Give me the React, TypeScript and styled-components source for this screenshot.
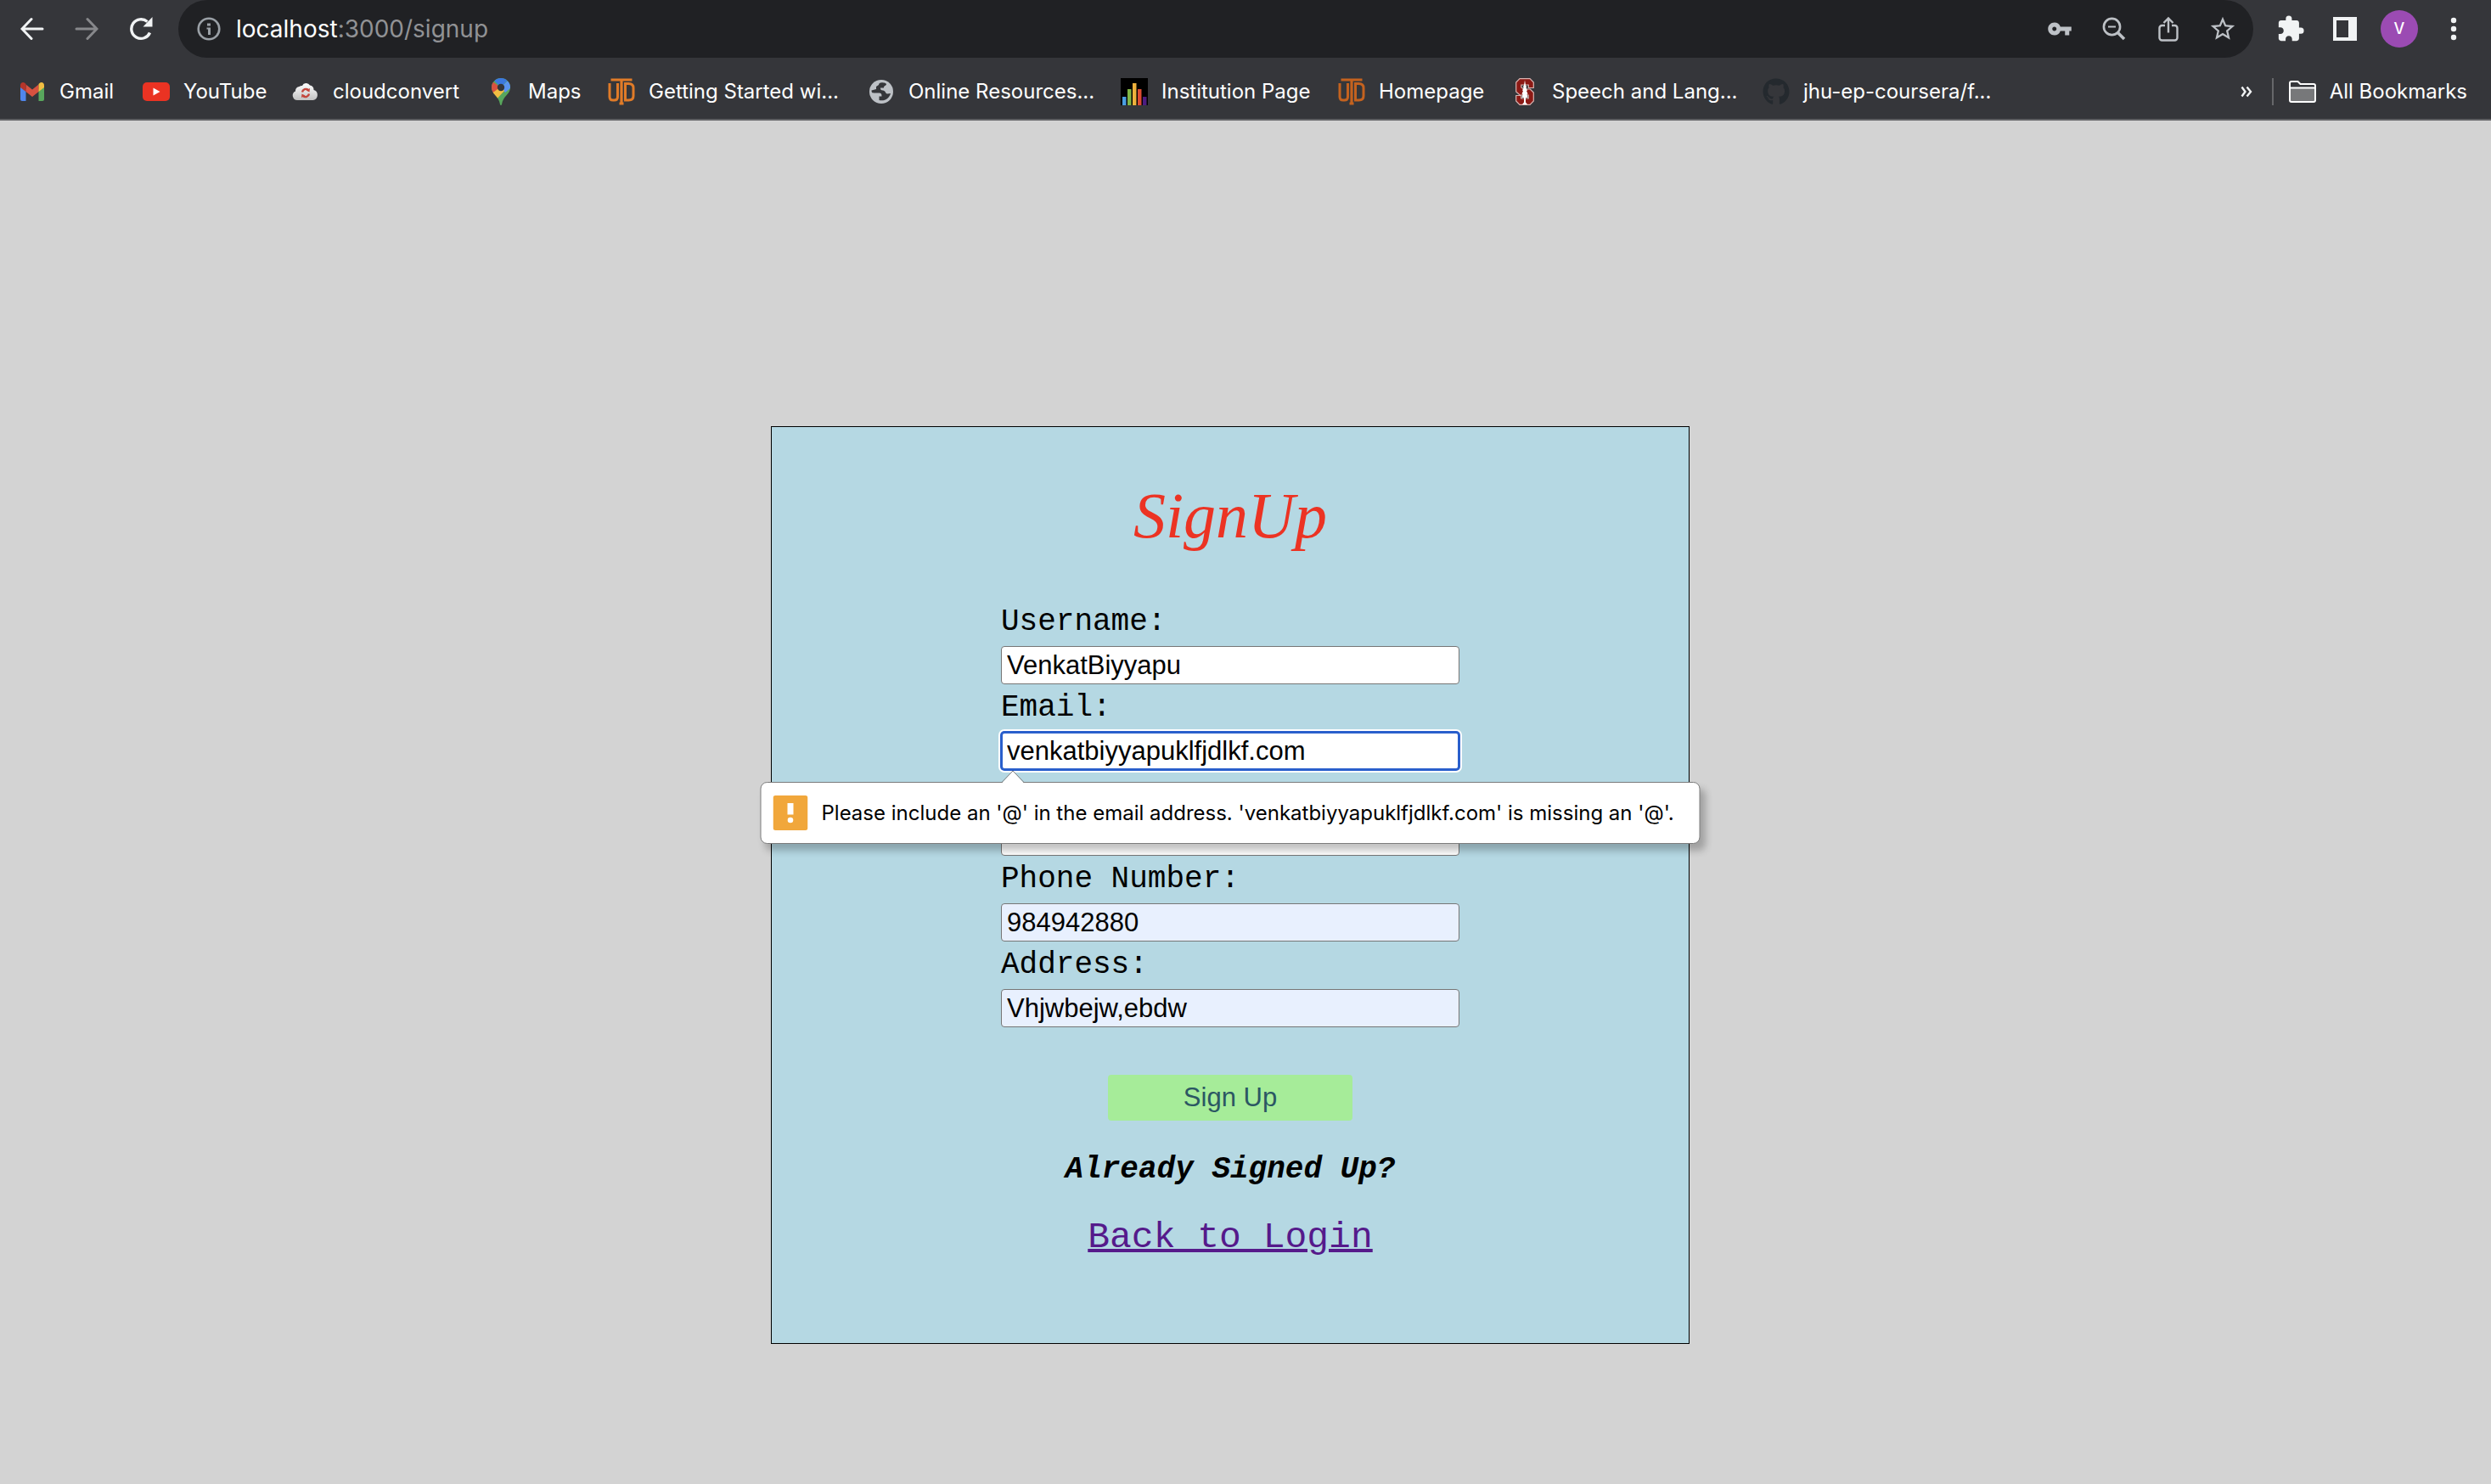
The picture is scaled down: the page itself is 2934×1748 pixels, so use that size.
import React from "react";
import styled, { createGlobalStyle, css } from "styled-components";
import { MdVpnKey, MdStarBorder, MdExtension } from "react-icons/md";
import { FaGithub } from "react-icons/fa";

const uiFont = `Inter, Roboto, sans-serif`;
const monoFont = `"Liberation Mono", "Courier New", monospace`;
const formFont = `"Liberation Sans", Arial, sans-serif`;

const GlobalStyle = createGlobalStyle`
  * { box-sizing: border-box; }
  body { margin: 0; background: #d3d3d3; }
`;

const Window = styled.div`
  display: flex;
  flex-direction: column;
  min-height: 100vh;
`;

const Chrome = styled.header`
  background: #35363a;
  border-bottom: 2px solid #5f6063;
  font-family: ${uiFont};
`;

const Toolbar = styled.div`
  display: flex;
  align-items: center;
  height: 68px;
  padding-right: 26px;
`;

const NavButtons = styled.nav`
  display: flex;
  gap: 28px;
  padding: 0 26px 0 20px;
`;

const IconButton = styled.button<{ $tone?: string }>`
  display: flex;
  align-items: center;
  justify-content: center;
  width: 36px;
  height: 36px;
  padding: 0;
  border: 0;
  background: none;
  color: ${(p) => p.$tone ?? "#f1f3f4"};
  font: 500 24px/1 ${uiFont};
`;

const Omnibox = styled.div`
  display: flex;
  flex: 1;
  align-items: center;
  height: 68px;
  padding: 0 18px;
  border-radius: 34px;
  background: #202124;
`;

const Address = styled.div`
  flex: 1;
  padding-left: 14px;
  color: #919295;
  font-size: 28px;
  line-height: 36px;
  b { color: #fff; font-weight: 400; }
`;

const OmniboxActions = styled.div`
  display: flex;
  gap: 28px;
`;

const ToolbarActions = styled.div`
  display: flex;
  align-items: center;
  gap: 28px;
  padding-left: 26px;
`;

const Avatar = styled.button`
  width: 44px;
  height: 44px;
  margin: 0 -4px;
  padding: 0;
  border: 0;
  border-radius: 50%;
  background: #9b4bb3;
  color: #fff;
  font: 500 18px/44px ${uiFont};
`;

const BookmarkBar = styled.nav`
  display: flex;
  align-items: center;
  height: 72px;
  padding: 8px 28px 0 22px;
`;

const Bookmark = styled.a<{ $width?: number }>`
  display: flex;
  flex: none;
  align-items: center;
  gap: 16px;
  width: ${(p) => (p.$width ? `${p.$width}px` : "auto")};
  color: #fff;
  font-size: 24px;
  line-height: 32px;
  white-space: nowrap;
  text-decoration: none;
`;

const BarEnd = styled.div`
  display: flex;
  align-items: center;
  gap: 12px;
  margin-left: auto;
`;

const Separator = styled.span`
  width: 2px;
  height: 32px;
  margin-right: 6px;
  background: #66676a;
`;

const Page = styled.main`
  display: flex;
  flex: 1;
  align-items: flex-start;
  justify-content: center;
  padding: 360px 36px 160px 0;
`;

const Card = styled.form`
  display: flex;
  flex-direction: column;
  align-items: center;
  width: 1082px;
  padding: 60px 0 98px;
  border: 1px solid #000;
  background: #b5d8e3;
`;

const Title = styled.h1`
  margin: 0 0 62px;
  color: #ec3323;
  font: italic 400 76px/88px "Apple Chancery", "Liberation Serif", serif;
`;

const Fields = styled.div`
  display: flex;
  flex-direction: column;
  gap: 8px;
  width: 540px;
`;

const Field = styled.div`
  position: relative;
  display: flex;
  flex-direction: column;
  gap: 8px;
`;

const Label = styled.label`
  min-height: 40px;
  color: #000;
  font: 400 36px/40px ${monoFont};
`;

const Input = styled.input<{ $state?: "filled" | "invalid" }>`
  width: 100%;
  height: 45px;
  padding: 0 6px;
  border: 1px solid #767676;
  border-radius: 4px;
  outline: 0;
  background: ${(p) => (p.$state === "filled" ? "#e8f0fe" : "#fff")};
  color: #000;
  font: 400 31px/40px ${formFont};
  ${(p) =>
    p.$state === "invalid" &&
    css`
      padding: 0 5px;
      border: 2px solid #2a5fcc;
      box-shadow: 0 0 0 1px #2a5fcc, 0 0 0 3px #fff;
    `}
`;

const Tooltip = styled.div`
  position: absolute;
  z-index: 1;
  top: 107px;
  left: 50%;
  display: flex;
  align-items: center;
  gap: 16px;
  width: 1107px;
  height: 73px;
  padding: 0 14px;
  border: 1px solid #7c7c7c;
  border-radius: 8px;
  background: #fff;
  box-shadow: 6px 8px 8px rgba(0, 0, 0, 0.24);
  color: #000;
  font: 400 24px/32px ${uiFont};
  white-space: nowrap;
  transform: translateX(-50%);
`;

const Pointer = styled.svg`
  position: absolute;
  top: -15px;
  left: 283px;
`;

const SubmitButton = styled.button`
  width: 288px;
  height: 54px;
  margin: 56px 0 34px;
  padding: 0;
  border: 0;
  border-radius: 4px;
  background: #a6ec99;
  color: #2b5763;
  font: 400 31px/40px ${formFont};
`;

const Prompt = styled.p`
  margin: 0 0 30px;
  color: #000;
  font: italic 700 36px/48px ${monoFont};
`;

const LoginLink = styled.a`
  color: #551a8b;
  font: 400 43px/52px ${monoFont};
  text-decoration: underline;
  text-decoration-thickness: 4px;
`;

const stroke = { fill: "none", stroke: "currentColor", strokeWidth: 3 };

const BackIcon = () => (
  <svg width="28" height="28" viewBox="0 0 28 28" {...stroke} strokeLinecap="round">
    <path d="M26 14H2.500M13 2.500 2 14l11 11.500" />
  </svg>
);
const ForwardIcon = () => (
  <svg width="28" height="28" viewBox="0 0 28 28" {...stroke} strokeLinecap="round">
    <path d="M2 14h23.500M15 2.500 26 14 15 25.500" />
  </svg>
);
const ReloadIcon = () => (
  <svg width="28" height="28" viewBox="0 0 28 28">
    <path d="M24.500 18.500A11.300 11.300 0 1 1 21.500 5.500" fill="none" stroke="currentColor" strokeWidth="3.400" />
    <path d="M27.500 0v11.500H16.500z" fill="currentColor" />
  </svg>
);
const InfoIcon = () => (
  <svg width="28" height="28" viewBox="0 0 28 28">
    <circle cx="14" cy="14" r="12.300" fill="none" stroke="#9aa0a6" strokeWidth="2.600" />
    <path d="M12 7.500h4v3h-4zM11.500 12.500H16v8.500h-3v-6.500h-1.500z" fill="#9aa0a6" />
  </svg>
);
const ZoomOutIcon = () => (
  <svg width="28" height="28" viewBox="0 0 28 28" {...stroke}>
    <circle cx="11.500" cy="11.500" r="9.600" strokeWidth="2.600" />
    <path d="M7 11.500h9" strokeWidth="2" />
    <path d="m18.500 18.500 7.500 7.500" strokeWidth="3.600" />
  </svg>
);
const ShareIcon = () => (
  <svg width="24" height="30" viewBox="0 0 24 30" {...stroke} strokeWidth={2.4}>
    <path d="M8 11H4.500a3 3 0 0 0-3 3v11.500a3 3 0 0 0 3 3h15a3 3 0 0 0 3-3V14a3 3 0 0 0-3-3H16M12 19.500V2.500M6.500 8 12 2.500 17.500 8" />
  </svg>
);
const PanelIcon = () => (
  <svg width="28" height="28" viewBox="0 0 28 28">
    <path fill="currentColor" fillRule="evenodd" d="M0 0h28v28H0zM4 4v20h14V4z" />
  </svg>
);
const DotsIcon = () => (
  <svg width="8" height="28" viewBox="0 0 8 28" fill="currentColor">
    <circle cx="4" cy="4" r="3.200" />
    <circle cx="4" cy="14" r="3.200" />
    <circle cx="4" cy="24" r="3.200" />
  </svg>
);
const FolderIcon = () => (
  <svg width="32" height="26" viewBox="0 0 32 26">
    <path d="M1.500 9h29v15.500h-29z" fill="#77787a" />
    <path d="M1 3a2 2 0 0 1 2-2h7.500l3 3H29a2 2 0 0 1 2 2v17a2 2 0 0 1-2 2H3a2 2 0 0 1-2-2zM1 8.500h30" fill="none" stroke="#fff" strokeWidth="2" />
  </svg>
);
const ChevronsIcon = () => (
  <svg width="14" height="14" viewBox="0 0 14 14" fill="none" stroke="#f1f3f4" strokeWidth="2.400">
    <path d="m1.500 1.500 4 5.500-4 5.500M7.500 1.500l4.500 5.500-4.500 5.500" />
  </svg>
);

const GmailIcon = () => (
  <svg width="32" height="32" viewBox="0 0 32 32">
    <path d="M2 9v16a2 2 0 0 0 2 2h4.500V13z" fill="#4f86ec" />
    <path d="M30 9v16a2 2 0 0 1-2 2h-4.500V13z" fill="#58a65c" />
    <path d="M8.500 7.500 16 13.500l7.500-6V16L16 22l-7.500-6z" fill="#d85140" />
    <path d="M2 8.500c0-3.500 3.500-4.500 5.500-2.500l1 1V16L2 11z" fill="#b5352a" />
    <path d="M30 8.500c0-3.500-3.500-4.500-5.500-2.500l-1 1V16l6.500-5z" fill="#f2be42" />
  </svg>
);
const YouTubeIcon = () => (
  <svg width="32" height="32" viewBox="0 0 32 32">
    <rect y="5" width="32" height="22" rx="5" fill="#ea3323" />
    <path d="m12.500 11.500 8 4.500-8 4.500z" fill="#fff" />
  </svg>
);
const CloudIcon = () => (
  <svg width="32" height="32" viewBox="0 0 32 32">
    <defs>
      <linearGradient id="cloud" x2="0" y2="1">
        <stop offset="0" stopColor="#fff" />
        <stop offset="1" stopColor="#c2c2c2" />
      </linearGradient>
    </defs>
    <path d="M6.500 26A5.500 5.500 0 0 1 4 15.500 5 5 0 0 1 8.500 10a5 5 0 0 1 3.500-1 5 5 0 0 1 9-.5 5 5 0 0 1 4.500 5.500A6.200 6.200 0 0 1 25 26z" fill="url(#cloud)" />
    <path d="M12 16.500a4.200 4.200 0 0 1 7-2.500M20 18.500a4.200 4.200 0 0 1-7 2.500" fill="none" stroke="#c4463c" strokeWidth="2.400" />
    <path d="m21 12-.5 4.500-4-2zM11 23l.5-4.500 4 2z" fill="#c4463c" />
  </svg>
);
const MapsIcon = () => (
  <svg width="32" height="32" viewBox="0 0 32 32">
    <defs>
      <clipPath id="pin">
        <path d="M16 0a11 11 0 0 0-11 11c0 8.500 8.500 9.500 10 20 .2 1.300 1.800 1.300 2 0 1.500-10.500 10-11.500 10-20A11 11 0 0 0 16 0z" />
      </clipPath>
    </defs>
    <g clipPath="url(#pin)">
      <path d="M0 0h32v32H0z" fill="#58a65c" />
      <path d="M16 11 27 0l5 8-11 9z" fill="#5a93f0" />
      <path d="M0 0 16 11 6 20 0 20z" fill="#d85140" />
      <path d="M8 3 16 11 26 0H12z" fill="#3b78e0" />
      <path d="M4 19 16 10l4 5L8 28z" fill="#f2be42" />
    </g>
    <circle cx="16" cy="11" r="4.200" fill="#35363a" />
  </svg>
);
const MonogramIcon = ({ color }: { color: string }) => (
  <svg width="32" height="32" viewBox="0 0 32 32" fill="none" stroke={color}>
    <path d="M3.500 2h25" strokeWidth="3" />
    <path d="M16 2v28M13.500 30h5" strokeWidth="3.200" />
    <path d="M2 6v16q0 4 4 4h1.500q4 0 4-4V6M20.500 6.500V26h4q5.500 0 5.500-5v-9.500q0-5-5.500-5z" strokeWidth="3" />
  </svg>
);
const GlobeIcon = () => (
  <svg width="32" height="32" viewBox="0 0 32 32">
    <circle cx="16" cy="16" r="14" fill="#bdc1c6" />
    <path d="M19 5.500c-4-1-6 .5-6 2.500l-3 2v3l-5.500 1.500c0 3 1.500 3 4.500 3h4c3 0 3.500 1 3.500 4h-3v4.500c7 1.500 12-2.500 13.500-8l-4 .5c-2 0-2-4-5-4-2.500 0-3-1-3-3h4c0-3 3-2.500 3-4.500-1-1-1.500-1.500-3-1.500z" fill="#35363a" />
  </svg>
);
const ChartIcon = () => (
  <svg width="32" height="32" viewBox="0 0 32 32">
    <path d="M0 0h32v32H0z" fill="#000" />
    <path d="M2 22h4.500v10H2z" fill="#4a9de0" />
    <path d="M8 13h4.500v19H8z" fill="#80b545" />
    <path d="M14 6h4.500v26H14z" fill="#eeb13c" />
    <path d="M20 13h4.500v19H20z" fill="#dd4b32" />
    <path d="M26 22h4.500v10H26z" fill="#4c1d80" />
  </svg>
);
const StanfordIcon = () => (
  <svg width="32" height="32" viewBox="0 0 32 32">
    <path d="M10 .7h12l4.300 4.300v6.500h-6V8h-8.500v3l3 2h7.500l4 4v10L22 31.300H10L5.700 27v-6.500h6V24h8.500v-4h-10l-4.500-4V5z" fill="#8c1a15" stroke="#d8b3b0" strokeWidth="1.200" />
    <path d="m16 2.500 1 6 1 1.500-.5 1.500 1.500 3-1 .5 1.500 3.500-1 .5 1 4h-2.500v5.500l2 2.500h-6l2-2.500V23h-2.500l1-4-1-.5 1.500-3.500-1-.5 1.500-3-.5-1.500 1-1.500z" fill="#fff" />
  </svg>
);

const AlertIcon = () => (
  <svg width="41" height="41" viewBox="0 0 41 41">
    <rect width="41" height="41" rx="3" fill="#f1a73b" />
    <path d="M17 9h7v13.500h-7z" fill="#fff" />
    <circle cx="20.500" cy="29" r="3.300" fill="#fff" />
  </svg>
);

const bookmarks = [
  { name: "Gmail", icon: <GmailIcon />, width: 146 },
  { name: "YouTube", icon: <YouTubeIcon />, width: 176 },
  { name: "cloudconvert", icon: <CloudIcon />, width: 230 },
  { name: "Maps", icon: <MapsIcon />, width: 142 },
  { name: "Getting Started wi...", icon: <MonogramIcon color="#e07b28" />, width: 306 },
  { name: "Online Resources...", icon: <GlobeIcon />, width: 298 },
  { name: "Institution Page", icon: <ChartIcon />, width: 256 },
  { name: "Homepage", icon: <MonogramIcon color="#c4621f" />, width: 204 },
  { name: "Speech and Lang...", icon: <StanfordIcon />, width: 296 },
  { name: "jhu-ep-coursera/f...", icon: <FaGithub size={32} color="#24292e" />, width: 280 },
];

export default function App() {
  return (
    <Window>
      <GlobalStyle />
      <Chrome>
        <Toolbar>
          <NavButtons>
            <IconButton aria-label="Back"><BackIcon /></IconButton>
            <IconButton aria-label="Forward" $tone="#87888b"><ForwardIcon /></IconButton>
            <IconButton aria-label="Reload"><ReloadIcon /></IconButton>
          </NavButtons>
          <Omnibox>
            <IconButton aria-label="Site information"><InfoIcon /></IconButton>
            <Address><b>localhost</b>:3000/signup</Address>
            <OmniboxActions>
              <IconButton aria-label="Passwords" $tone="#bdc1c6"><MdVpnKey size={30} /></IconButton>
              <IconButton aria-label="Zoom" $tone="#bdc1c6"><ZoomOutIcon /></IconButton>
              <IconButton aria-label="Share" $tone="#bdc1c6"><ShareIcon /></IconButton>
              <IconButton aria-label="Bookmark this tab" $tone="#bdc1c6"><MdStarBorder size={34} /></IconButton>
            </OmniboxActions>
          </Omnibox>
          <ToolbarActions>
            <IconButton aria-label="Extensions"><MdExtension size={34} /></IconButton>
            <IconButton aria-label="Side panel"><PanelIcon /></IconButton>
            <Avatar aria-label="Profile">V</Avatar>
            <IconButton aria-label="Menu"><DotsIcon /></IconButton>
          </ToolbarActions>
        </Toolbar>
        <BookmarkBar aria-label="Bookmarks">
          {bookmarks.map((b) => (
            <Bookmark key={b.name} href="#" $width={b.width}>
              {b.icon}
              {b.name}
            </Bookmark>
          ))}
          <BarEnd>
            <IconButton aria-label="More bookmarks"><ChevronsIcon /></IconButton>
            <Separator />
            <Bookmark href="#">
              <FolderIcon />
              All Bookmarks
            </Bookmark>
          </BarEnd>
        </BookmarkBar>
      </Chrome>
      <Page>
        <Card noValidate onSubmit={(e) => e.preventDefault()}>
          <Title>SignUp</Title>
          <Fields>
            <Field>
              <Label htmlFor="username">Username:</Label>
              <Input id="username" defaultValue="VenkatBiyyapu" />
            </Field>
            <Field>
              <Label htmlFor="email">Email:</Label>
              <Input id="email" type="email" $state="invalid" aria-describedby="email-error" defaultValue="venkatbiyyapuklfjdlkf.com" />
              <Tooltip id="email-error" role="alert">
                <Pointer width="27" height="16" viewBox="0 0 27 16" aria-hidden="true">
                  <path d="M0 16 13.500 1 27 16z" fill="#fff" />
                  <path d="M0 15 13.500 1 27 15" fill="none" stroke="#7c7c7c" />
                </Pointer>
                <AlertIcon />
                Please include an '@' in the email address. 'venkatbiyyapuklfjdlkf.com' is missing an '@'.
              </Tooltip>
            </Field>
            <Field>
              <Label htmlFor="password" />
              <Input id="password" type="password" aria-label="Password" />
            </Field>
            <Field>
              <Label htmlFor="phone">Phone Number:</Label>
              <Input id="phone" type="tel" $state="filled" defaultValue="984942880" />
            </Field>
            <Field>
              <Label htmlFor="address">Address:</Label>
              <Input id="address" $state="filled" defaultValue="Vhjwbejw,ebdw" />
            </Field>
          </Fields>
          <SubmitButton type="submit">Sign Up</SubmitButton>
          <Prompt>Already Signed Up?</Prompt>
          <LoginLink href="#">Back to Login</LoginLink>
        </Card>
      </Page>
    </Window>
  );
}
